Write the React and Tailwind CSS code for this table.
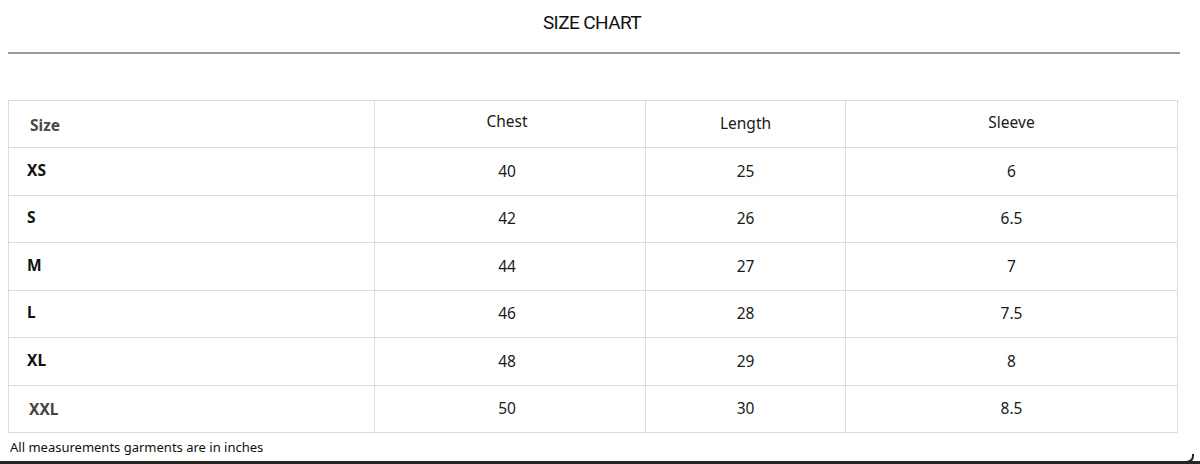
import React from "react";

const rows = [
  ["XS", "40", "25", "6"],
  ["S", "42", "26", "6.5"],
  ["M", "44", "27", "7"],
  ["L", "46", "28", "7.5"],
  ["XL", "48", "29", "8"],
  ["XXL", "50", "30", "8.5"],
];

const App = () => {
  return (
    <div className="w-[1200px] h-[464px] bg-white relative overflow-hidden flex flex-col font-['Noto_Sans','Lato',sans-serif]">
      <div className="h-[46px] flex items-center justify-center pr-[16px]">
        <h1 className="text-[19px] text-[#111] tracking-[-0.6px] font-['Roboto',sans-serif]">
          SIZE CHART
        </h1>
      </div>
      <div className="ml-[8px] w-[1172px] h-[2px] bg-[#9a9a9a] mt-[6px]" />
      <div className="h-[46px]" />
      <table className="ml-[8px] w-[1169px] border-collapse table-fixed text-[15.5px] text-[#1a1a1a]">
        <colgroup>
          <col className="w-[366px]" />
          <col className="w-[271px]" />
          <col className="w-[200px]" />
          <col className="w-[332px]" />
        </colgroup>
        <thead>
          <tr className="h-[47px]">
            <th className="border border-[#dcdcdc] text-left pl-[21px] pt-[3px] font-bold text-[#4a4a4a]">Size</th>
            <th className="border border-[#dcdcdc] font-normal pb-[4px] pr-[6px]">Chest</th>
            <th className="border border-[#dcdcdc] font-normal">Length</th>
            <th className="border border-[#dcdcdc] font-normal pb-[2px]">Sleeve</th>
          </tr>
        </thead>
        <tbody>
          {rows.map((r) => (
            <tr key={r[0]} className="h-[47.5px]">
              <td
                className={`border border-[#dcdcdc] font-bold pb-[2px] ${
                  r[0] === "XXL" ? "text-[#444] pl-[20px] pt-[4px]" : "text-[#111] pl-[18px]"
                }`}
              >
                {r[0]}
              </td>
              <td className="border border-[#dcdcdc] text-center pr-[6px]">{r[1]}</td>
              <td className="border border-[#dcdcdc] text-center">{r[2]}</td>
              <td className="border border-[#dcdcdc] text-center">{r[3]}</td>
            </tr>
          ))}
        </tbody>
      </table>
      <p className="ml-[10px] mt-[5px] text-[13px] text-[#111]">All measurements garments are in inches</p>
      <div className="absolute left-0 bottom-0 w-full h-[3px] bg-[#2b2522]" />
      <div className="absolute right-[6px] bottom-0 w-[10px] h-[10px] rounded-br-[8px] border-r-[2px] border-b-[3px] border-[#2b2522] bg-white" />
    </div>
  );
};

export default App;
